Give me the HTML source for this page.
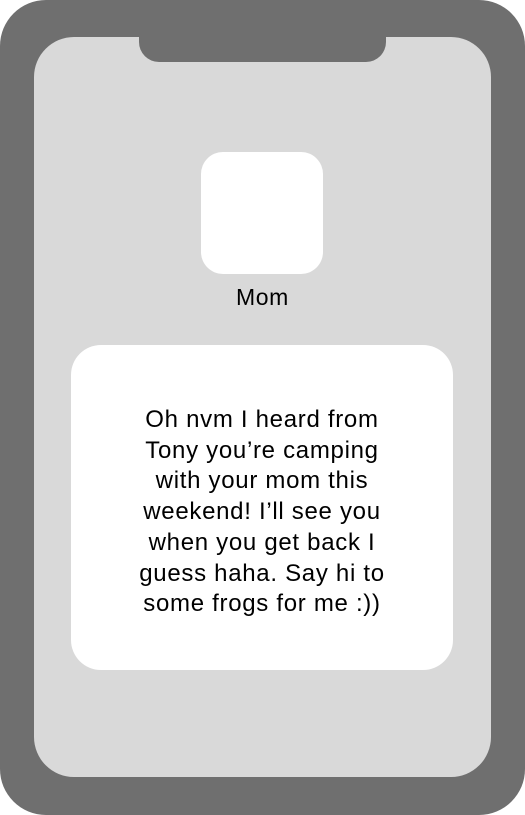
<!DOCTYPE html>
<html><head><style>
html,body{margin:0;padding:0;width:525px;height:815px;overflow:hidden;background:#fff}
.phone{position:absolute;left:0;top:0;width:525px;height:815px;background:#6f6f6f;border-radius:46px}
.screen{position:absolute;left:34px;top:37px;width:457px;height:740px;background:#d9d9d9;border-radius:40px}
.notch{position:absolute;left:139px;top:20px;width:247px;height:42px;background:#6f6f6f;border-radius:0 0 20px 20px}
.avatar{position:absolute;left:201px;top:152px;width:122px;height:122px;background:#fff;border-radius:22px}
.name{position:absolute;left:0;width:525px;top:284px;text-align:center;font:23px "Liberation Sans",sans-serif;letter-spacing:.6px;color:#000}
.bubble{position:absolute;left:71px;top:345px;width:382px;height:325px;background:#fff;border-radius:30px}
.msg{position:absolute;left:51px;width:422px;top:405px;text-align:center;font:24px/30.7px "Liberation Sans",sans-serif;letter-spacing:.7px;color:#000}
</style></head><body>
<div class="phone"></div>
<div class="screen"></div>
<div class="notch"></div>
<div class="avatar"></div>
<div class="name">Mom</div>
<div class="bubble"></div>
<div class="msg">Oh nvm I heard from<br>Tony you’re camping<br>with your mom this<br>weekend! I’ll see you<br>when you get back I<br>guess haha. Say hi to<br>some frogs for me :))</div>
</body></html>
